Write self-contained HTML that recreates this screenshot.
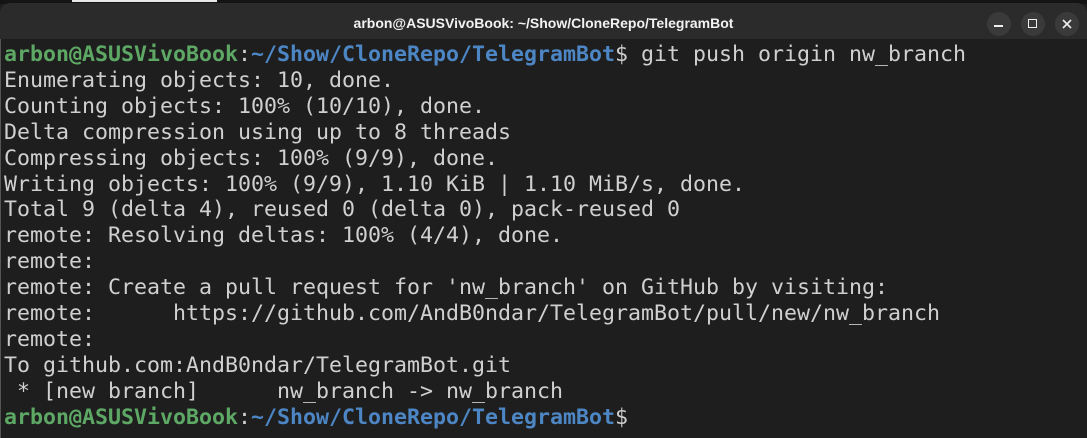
<!DOCTYPE html>
<html><head><style>
html,body{margin:0;padding:0;width:1087px;height:438px;overflow:hidden;background:#1e1e1e;}
.top{position:absolute;left:0;top:0;width:1087px;height:4px;background:#141414;}
.top .w{position:absolute;left:72px;top:0;width:145px;height:2px;background:#e8e8e8;}
.bar{position:absolute;left:0;top:3px;width:1087px;height:36px;background:#2b2b2b;border-radius:10px 10px 0 0;}
.title{position:absolute;left:0;width:1087px;top:12px;text-align:center;color:#f2f2f2;font:bold 14px "Liberation Sans",sans-serif;}
.btn{position:absolute;top:9px;width:24px;height:24px;border-radius:12px;background:#3a3a3a;}
.term{position:absolute;left:4px;top:42px;font-family:"DejaVu Sans Mono",monospace;font-size:21.6px;line-height:25.9px;color:#d0d0d0;white-space:pre;}
.g{color:#5ea865;font-weight:bold}.b{color:#4d86c4;font-weight:bold}
.edge{position:absolute;left:0;top:39px;width:1px;height:399px;background:#555;}
</style></head><body>
<div class="top"><div class="w"></div></div>
<div class="bar">
<div class="title">arbon@ASUSVivoBook: ~/Show/CloneRepo/TelegramBot</div>
<div class="btn" style="left:987px"><div style="position:absolute;left:7px;top:13px;width:9px;height:1.5px;background:#eee"></div></div>
<div class="btn" style="left:1021px"><div style="position:absolute;left:7px;top:7px;border:1.5px solid #eee;width:7px;height:7px"></div></div>
<div class="btn" style="left:1055px"><svg width="24" height="24" style="position:absolute;left:0;top:0"><path d="M8 8L16 16M16 8L8 16" stroke="#eee" stroke-width="1.6"/></svg></div>
</div>
<div class="edge"></div>
<div class="term"><span class="g">arbon@ASUSVivoBook</span>:<span class="b">~/Show/CloneRepo/TelegramBot</span>$ git push origin nw_branch
Enumerating objects: 10, done.
Counting objects: 100% (10/10), done.
Delta compression using up to 8 threads
Compressing objects: 100% (9/9), done.
Writing objects: 100% (9/9), 1.10 KiB | 1.10 MiB/s, done.
Total 9 (delta 4), reused 0 (delta 0), pack-reused 0
remote: Resolving deltas: 100% (4/4), done.
remote: 
remote: Create a pull request for 'nw_branch' on GitHub by visiting:
remote:      https://github.com/AndB0ndar/TelegramBot/pull/new/nw_branch
remote: 
To github.com:AndB0ndar/TelegramBot.git
 * [new branch]      nw_branch -&gt; nw_branch
<span class="g">arbon@ASUSVivoBook</span>:<span class="b">~/Show/CloneRepo/TelegramBot</span>$ </div>
</body></html>
